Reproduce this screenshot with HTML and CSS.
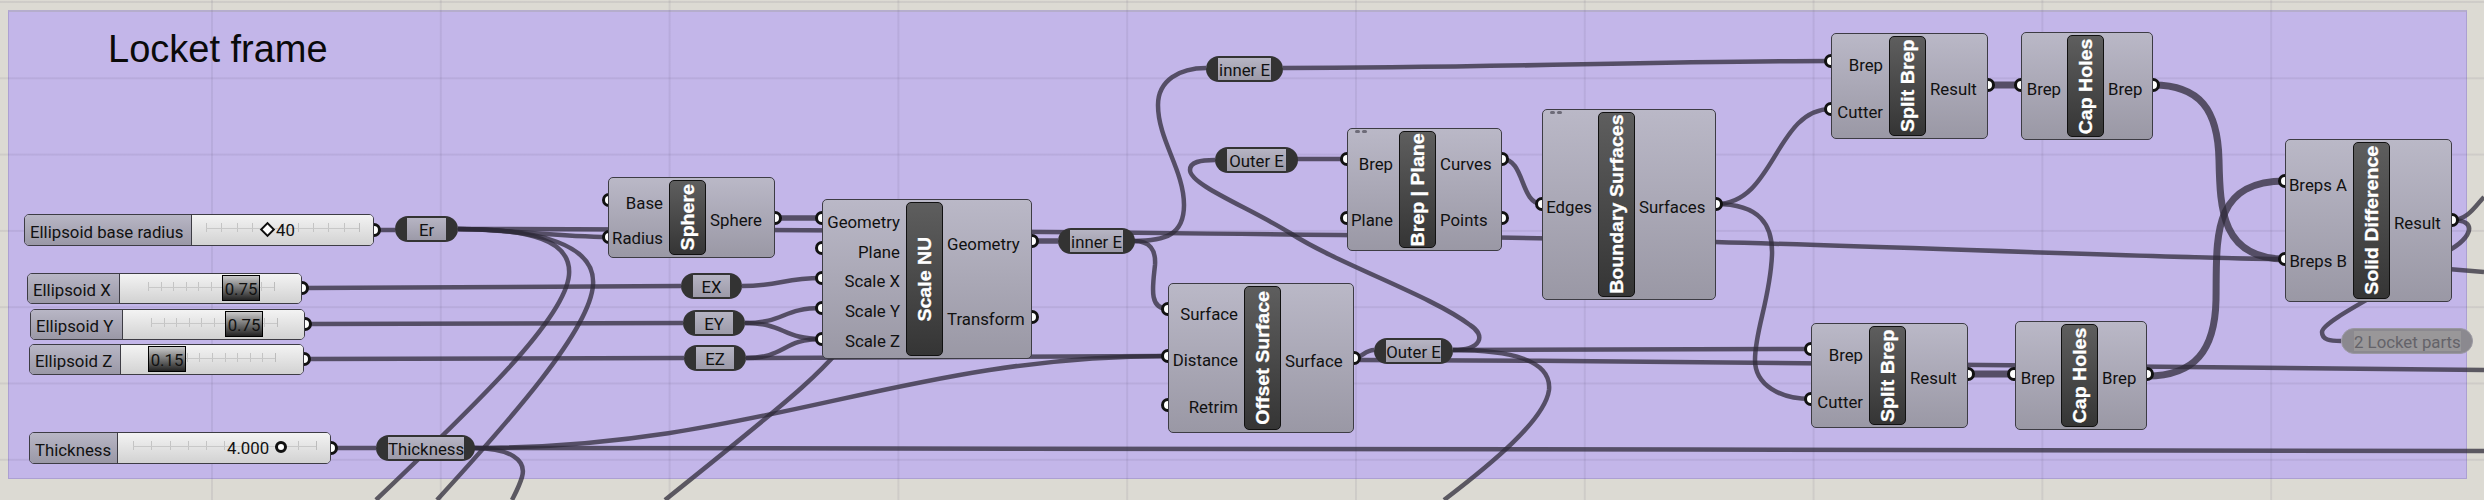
FILE: index.html
```html
<!DOCTYPE html>
<html lang="en">
<head>
    <meta charset="UTF-8">
    <title>Locket frame</title>
    <link rel="stylesheet" href="styles.css">
</head>
<body>
    <div class="canvas">
        <div class="group"><div class="group-name">Locket frame</div></div>
        <div class="grid"></div>

        <!-- wires and ports sit under the components -->
        <svg class="wires" width="2484" height="500" viewBox="0 0 2484 500">
            <path class="wire" d="M376 230H395"/>
            <path class="wire" d="M458 229C500 229 560 237 608 237"/>
            <path class="wire" d="M458 229C1000 230 1500 236 1715 242C1900 247 2200 259 2285 259"/>
            <path class="wire" d="M458 229C530 229 572 240 569 275C565 320 470 410 376 500"/>
            <path class="wire" d="M458 229C540 229 596 245 593 285C590 330 510 420 437 500"/>
            <path class="wire" d="M304 288L681 286"/>
            <path class="wire" d="M307 324L683 323"/>
            <path class="wire" d="M306 359L684 358"/>
            <path class="wire" d="M331 448H376"/>
            <path class="wire" d="M742 286C782 286 782 278 822 278"/>
            <path class="wire" d="M745 323C785 323 782 308 822 308"/>
            <path class="wire" d="M745 323C785 323 782 339 822 339"/>
            <path class="wire" d="M746 358C786 358 782 339 822 339"/>
            <path class="wire" d="M746 358C900 358 1000 356 1168 356"/>
            <path class="wire" d="M474 448C760 448 900 356 1168 356"/>
            <path class="wire" d="M474 448C1200 448 1800 450 2484 451"/>
            <path class="wire" d="M474 448C510 448 527 460 522 477C519 487 515 494 512 500"/>
            <path class="wire" d="M860 320C840 360 790 400 665 500"/>
            <path class="wire wide" d="M775 218H822"/>
            <path class="wire wide" d="M1032 241H1058"/>
            <path class="wire" d="M1134 241C1165 241 1184 235 1184 205C1184 170 1158 140 1158 105C1158 80 1180 68 1206 68"/>
            <path class="wire" d="M1134 241C1150 241 1156 250 1155 265C1153 285 1148 309 1168 309"/>
            <path class="wire" d="M1283 68C1500 68 1650 61 1831 61"/>
            <path class="wire" d="M1297 159H1347"/>
            <path class="wire" d="M1453 350C1482 350 1486 335 1470 325C1430 295 1340 265 1290 233C1250 208 1190 185 1190 170C1190 162 1200 160 1215 160"/>
            <path class="wire" d="M1354 358C1362 358 1365 350 1374 350"/>
            <path class="wire" d="M1453 350L1811 349"/>
            <path class="wire" d="M1360 360C1700 361 2000 364 2484 370"/>
            <path class="wire" d="M1453 350C1510 350 1552 360 1549 390C1545 420 1490 465 1444 500"/>
            <path class="wire" d="M1502 159C1525 159 1520 204 1542 204"/>
            <path class="wire" d="M1716 204C1775 204 1775 109 1831 109"/>
            <path class="wire" d="M1716 204C1760 204 1773 225 1772 255C1770 300 1755 330 1755 360C1755 385 1780 399 1811 399"/>
            <path class="wire thick" d="M1988 85H2021"/>
            <path class="wire thick" d="M1968 374H2014"/>
            <path class="wire thick" d="M2153 85C2200 85 2218 110 2219 160C2220 210 2222 259 2285 259"/>
            <path class="wire thick" d="M2147 376C2195 376 2215 350 2216 300C2217 240 2210 181 2285 181"/>
            <path class="wire" d="M2452 220C2480 220 2472 240 2440 255C2400 285 2322 320 2322 332C2322 340 2330 341 2341 341"/>
            <path class="wire" d="M2452 220C2468 220 2476 205 2484 197"/>
            <path class="wire" d="M2400 265L2484 272"/>

            <g class="ports">
                <circle cx="374" cy="230" r="5.5"/><circle cx="302" cy="288" r="5.5"/>
                <circle cx="305" cy="324" r="5.5"/><circle cx="304" cy="359" r="5.5"/>
                <circle cx="331" cy="448" r="5.5"/>
                <circle cx="609" cy="200" r="5.5"/><circle cx="609" cy="237" r="5.5"/>
                <circle cx="775" cy="218" r="5.5"/>
                <circle cx="822" cy="218" r="5.5"/><circle cx="822" cy="248" r="5.5"/>
                <circle cx="822" cy="278" r="5.5"/><circle cx="822" cy="308" r="5.5"/>
                <circle cx="822" cy="339" r="5.5"/>
                <circle cx="1032" cy="241" r="5.5"/><circle cx="1032" cy="317" r="5.5"/>
                <circle cx="1168" cy="309" r="5.5"/><circle cx="1168" cy="356" r="5.5"/>
                <circle cx="1168" cy="405" r="5.5"/><circle cx="1354" cy="358" r="5.5"/>
                <circle cx="1347" cy="159" r="5.5"/><circle cx="1347" cy="218" r="5.5"/>
                <circle cx="1502" cy="159" r="5.5"/><circle cx="1502" cy="218" r="5.5"/>
                <circle cx="1542" cy="204" r="5.5"/><circle cx="1716" cy="204" r="5.5"/>
                <circle cx="1831" cy="61" r="5.5"/><circle cx="1831" cy="109" r="5.5"/>
                <circle cx="1988" cy="85" r="5.5"/>
                <circle cx="2021" cy="85" r="5.5"/><circle cx="2153" cy="85" r="5.5"/>
                <circle cx="1811" cy="349" r="5.5"/><circle cx="1811" cy="399" r="5.5"/>
                <circle cx="1968" cy="374" r="5.5"/>
                <circle cx="2014" cy="374" r="5.5"/><circle cx="2147" cy="374" r="5.5"/>
                <circle cx="2285" cy="181" r="5.5"/><circle cx="2285" cy="259" r="5.5"/>
                <circle cx="2452" cy="220" r="5.5"/>
            </g>
        </svg>

        <!-- number sliders -->
        <div class="slider s-radius">
            <div class="slider-name">Ellipsoid base radius</div>
            <div class="slider-rail">
                <div class="track"></div>
                <div class="knob-diamond"></div>
                <div class="value">40</div>
            </div>
        </div>
        <div class="slider s-x">
            <div class="slider-name">Ellipsoid X</div>
            <div class="slider-rail"><div class="track"></div><div class="handle">0.75</div></div>
        </div>
        <div class="slider s-y">
            <div class="slider-name">Ellipsoid Y</div>
            <div class="slider-rail"><div class="track"></div><div class="handle">0.75</div></div>
        </div>
        <div class="slider s-z">
            <div class="slider-name">Ellipsoid Z</div>
            <div class="slider-rail"><div class="track"></div><div class="handle">0.15</div></div>
        </div>
        <div class="slider s-thick">
            <div class="slider-name">Thickness</div>
            <div class="slider-rail">
                <div class="track"></div>
                <div class="value">4.000</div>
                <div class="knob-ring"></div>
            </div>
        </div>

        <!-- relays -->
        <div class="pill p-er"><div class="pill-box">Er</div></div>
        <div class="pill p-ex"><div class="pill-box">EX</div></div>
        <div class="pill p-ey"><div class="pill-box">EY</div></div>
        <div class="pill p-ez"><div class="pill-box">EZ</div></div>
        <div class="pill p-thick"><div class="pill-box">Thickness</div></div>
        <div class="pill p-inner-low"><div class="pill-box">inner E</div></div>
        <div class="pill p-inner-up"><div class="pill-box">inner E</div></div>
        <div class="pill p-outer-up"><div class="pill-box">Outer E</div></div>
        <div class="pill p-outer-low"><div class="pill-box">Outer E</div></div>
        <div class="pill p-parts"><div class="pill-box">2 Locket parts</div></div>

        <!-- components -->
        <div class="node n-sphere">
            <div class="inputs"><span>Base</span><span>Radius</span></div>
            <div class="title"><span>Sphere</span></div>
            <div class="outputs"><span>Sphere</span></div>
        </div>
        <div class="node n-scale">
            <div class="inputs"><span>Geometry</span><span>Plane</span><span>Scale X</span><span>Scale Y</span><span>Scale Z</span></div>
            <div class="title"><span>Scale NU</span></div>
            <div class="outputs"><span>Geometry</span><span>Transform</span></div>
        </div>
        <div class="node n-offset">
            <div class="inputs"><span>Surface</span><span>Distance</span><span>Retrim</span></div>
            <div class="title"><span>Offset Surface</span></div>
            <div class="outputs"><span>Surface</span></div>
        </div>
        <div class="node n-plane dotted">
            <div class="inputs"><span>Brep</span><span>Plane</span></div>
            <div class="title"><span>Brep | Plane</span></div>
            <div class="outputs"><span>Curves</span><span>Points</span></div>
        </div>
        <div class="node n-boundary dotted">
            <div class="inputs"><span>Edges</span></div>
            <div class="title"><span>Boundary Surfaces</span></div>
            <div class="outputs"><span>Surfaces</span></div>
        </div>
        <div class="node n-split-a">
            <div class="inputs"><span>Brep</span><span>Cutter</span></div>
            <div class="title"><span>Split Brep</span></div>
            <div class="outputs"><span>Result</span></div>
        </div>
        <div class="node n-cap-a">
            <div class="inputs"><span>Brep</span></div>
            <div class="title"><span>Cap Holes</span></div>
            <div class="outputs"><span>Brep</span></div>
        </div>
        <div class="node n-split-b">
            <div class="inputs"><span>Brep</span><span>Cutter</span></div>
            <div class="title"><span>Split Brep</span></div>
            <div class="outputs"><span>Result</span></div>
        </div>
        <div class="node n-cap-b">
            <div class="inputs"><span>Brep</span></div>
            <div class="title"><span>Cap Holes</span></div>
            <div class="outputs"><span>Brep</span></div>
        </div>
        <div class="node n-solid">
            <div class="inputs"><span>Breps A</span><span>Breps B</span></div>
            <div class="title"><span>Solid Difference</span></div>
            <div class="outputs"><span>Result</span></div>
        </div>
    </div>
</body>
</html>
```

FILE: styles.css
```css
html, body {
    margin: 0;
    padding: 0;
    overflow: hidden;
}
body {
    font-family: Roboto, "Liberation Sans", sans-serif;
    font-size: 16.8px;
    color: #111;
    background-color: #dcdad3;
}
.canvas {
    position: relative;
    width: 2484px;
    height: 500px;
    overflow: hidden;
}

/* group frame and canvas grid */
.group {
    position: absolute;
    left: 8px;
    top: 10px;
    width: 2459px;
    height: 469px;
    box-sizing: border-box;
    padding: 16px 0 0 99px;
    background-color: #c3b6e9;
    border: 1px solid #aca0d2;
    border-top: 2px solid #b5adcc;
}
.group-name {
    font-family: "Liberation Sans", Arial, sans-serif;
    font-size: 38px;
    color: #0a0a0a;
}
.grid {
    position: absolute;
    inset: 0;
    background-image:
        linear-gradient(90deg, rgba(70, 60, 90, 0.09) 2px, transparent 2px),
        linear-gradient(rgba(70, 60, 90, 0.09) 2px, transparent 2px);
    background-size: 228.8px 100%, 100% 76.3px;
    background-position: 211px 0, 0 1px;
}

/* wires */
.wires {
    position: absolute;
    left: 0;
    top: 0;
}
.wire {
    fill: none;
    stroke: #2e2a38;
    stroke-opacity: 0.74;
    stroke-width: 4.5;
}
.wire.wide {
    stroke-width: 5.5;
}
.wire.thick {
    stroke-width: 7;
}
.ports circle {
    fill: #fff;
    stroke: #111;
    stroke-width: 3;
}

/* components */
.node {
    position: absolute;
    box-sizing: border-box;
    display: flex;
    padding: 2px 0;
    background: linear-gradient(#bab8c7, #9a98a5);
    border: 1.5px solid #3d3c44;
    border-radius: 5px;
}
.inputs, .outputs {
    display: flex;
    flex-direction: column;
    justify-content: space-around;
    padding-top: 5px;
    white-space: nowrap;
}
.inputs {
    width: var(--in);
    flex: none;
    box-sizing: border-box;
    padding-right: 6px;
    text-align: right;
}
.outputs {
    flex: 1;
    padding-left: 4px;
}
.title {
    flex: none;
    width: 37px;
    box-sizing: border-box;
    display: flex;
    align-items: center;
    justify-content: center;
    background: linear-gradient(#5e5e5e, #353535);
    border: 1.5px solid #111;
    border-radius: 5px;
    color: #fff;
    font-family: "Liberation Sans", Arial, sans-serif;
    font-weight: bold;
    font-size: 19px;
    -webkit-text-stroke: 0.3px #fff;
    white-space: nowrap;
}
.title span {
    writing-mode: vertical-rl;
    transform: rotate(180deg) scaleY(1.03);
}
.dotted::before {
    content: "";
    position: absolute;
    left: 7px;
    top: 1px;
    width: 5px;
    height: 3px;
    border-radius: 2px;
    background: #6d6b78;
    box-shadow: 7px 0 0 #6d6b78;
}
.n-sphere { left: 608px; top: 177px; width: 167px; height: 81px; --in: 60px; }
.n-scale { left: 822px; top: 199px; width: 210px; height: 160px; --in: 83px; }
.n-offset { left: 1168px; top: 283px; width: 186px; height: 150px; --in: 75px; }
.n-plane { left: 1347px; top: 128px; width: 155px; height: 123px; --in: 51px; }
.n-boundary { left: 1542px; top: 109px; width: 174px; height: 191px; --in: 55px; }
.n-split-a { left: 1831px; top: 33px; width: 157px; height: 106px; --in: 57px; }
.n-cap-a { left: 2021px; top: 32px; width: 132px; height: 108px; --in: 45px; }
.n-split-b { left: 1811px; top: 323px; width: 157px; height: 105px; --in: 57px; }
.n-cap-b { left: 2015px; top: 321px; width: 132px; height: 109px; --in: 45px; }
.n-solid { left: 2285px; top: 139px; width: 167px; height: 163px; --in: 67px; }

/* relays */
.pill {
    position: absolute;
    box-sizing: border-box;
    height: 26px;
    display: flex;
    padding: 2px 12px;
    background-color: #333;
    border-radius: 13px;
}
.pill-box {
    flex: 1;
    display: flex;
    align-items: center;
    justify-content: center;
    padding-top: 2px;
    background: linear-gradient(#b6b4c3, #9c9aa8);
    white-space: nowrap;
}
.p-er { left: 395px; top: 216px; width: 63px; }
.p-ex { left: 681px; top: 273px; width: 61px; }
.p-ey { left: 683px; top: 310px; width: 62px; }
.p-ez { left: 684px; top: 345px; width: 62px; }
.p-thick { left: 376px; top: 435px; width: 99px; }
.p-inner-low { left: 1058px; top: 228px; width: 77px; }
.p-inner-up { left: 1206px; top: 56px; width: 77px; }
.p-outer-up { left: 1215px; top: 147px; width: 83px; }
.p-outer-low { left: 1374px; top: 338px; width: 79px; }
.p-parts {
    left: 2341px;
    top: 328px;
    width: 132px;
    background-color: #8b898f;
    border: 1px solid #9a98a2;
    color: #646369;
}
.p-parts .pill-box {
    background: #999799;
}

/* number sliders */
.slider {
    position: absolute;
    box-sizing: border-box;
    display: flex;
    height: 31px;
    border: 1.5px solid #3d3c44;
    border-radius: 5px;
    overflow: hidden;
}
.slider-name {
    flex: none;
    box-sizing: border-box;
    display: flex;
    align-items: center;
    padding: 3px 0 0 5px;
    background: linear-gradient(#b8b6c5, #9a98a6);
    border-right: 1.5px solid #3d3c44;
    white-space: nowrap;
}
.slider-rail {
    position: relative;
    flex: 1;
    background: linear-gradient(#f3f3f3, #d2d2d2);
}
.track {
    position: absolute;
    top: 8px;
    height: 9px;
    background-image:
        linear-gradient(#c8c8c8, #c8c8c8),
        repeating-linear-gradient(90deg, #c4c4c4 0 1px, transparent 1px var(--tick));
    background-size: 100% 1px, 100% 100%;
    background-position: 0 5px, 0 0;
    background-repeat: no-repeat;
    border-right: 1px solid #bcbcbc;
}
.handle {
    position: absolute;
    top: 1px;
    width: 38px;
    height: 26px;
    box-sizing: border-box;
    display: flex;
    align-items: center;
    justify-content: center;
    padding-top: 2px;
    background: linear-gradient(#cacaca, #222);
    border: 1.5px solid #000;
}
.value {
    position: absolute;
    top: 5px;
}
.knob-diamond {
    position: absolute;
    left: 70px;
    top: 9px;
    width: 7px;
    height: 7px;
    background: #fff;
    border: 2px solid #111;
    transform: rotate(45deg);
}
.knob-ring {
    position: absolute;
    left: 157px;
    top: 8px;
    width: 6px;
    height: 6px;
    background: #fff;
    border: 3px solid #111;
    border-radius: 50%;
}
.s-radius { left: 24px; top: 214px; width: 350px; height: 32px; }
.s-radius .slider-name { width: 167px; }
.s-radius .track { left: 14px; width: 153px; --tick: 15.3px; }
.s-radius .value { left: 84px; }
.s-x { left: 27px; top: 273px; width: 275px; }
.s-x .slider-name { width: 92px; }
.s-x .track { left: 28px; width: 126px; --tick: 12.6px; }
.s-x .handle { left: 102px; }
.s-y { left: 30px; top: 309px; width: 275px; }
.s-y .slider-name { width: 92px; }
.s-y .track { left: 28px; width: 126px; --tick: 12.6px; }
.s-y .handle { left: 102px; }
.s-z { left: 29px; top: 344px; width: 275px; }
.s-z .slider-name { width: 91px; }
.s-z .track { left: 28px; width: 126px; --tick: 12.6px; }
.s-z .handle { left: 27px; }
.s-thick { left: 29px; top: 432px; width: 302px; height: 32px; }
.s-thick .slider-name { width: 88px; }
.s-thick .track { left: 15px; width: 183px; --tick: 18.3px; }
.s-thick .value { left: 109px; }
```
